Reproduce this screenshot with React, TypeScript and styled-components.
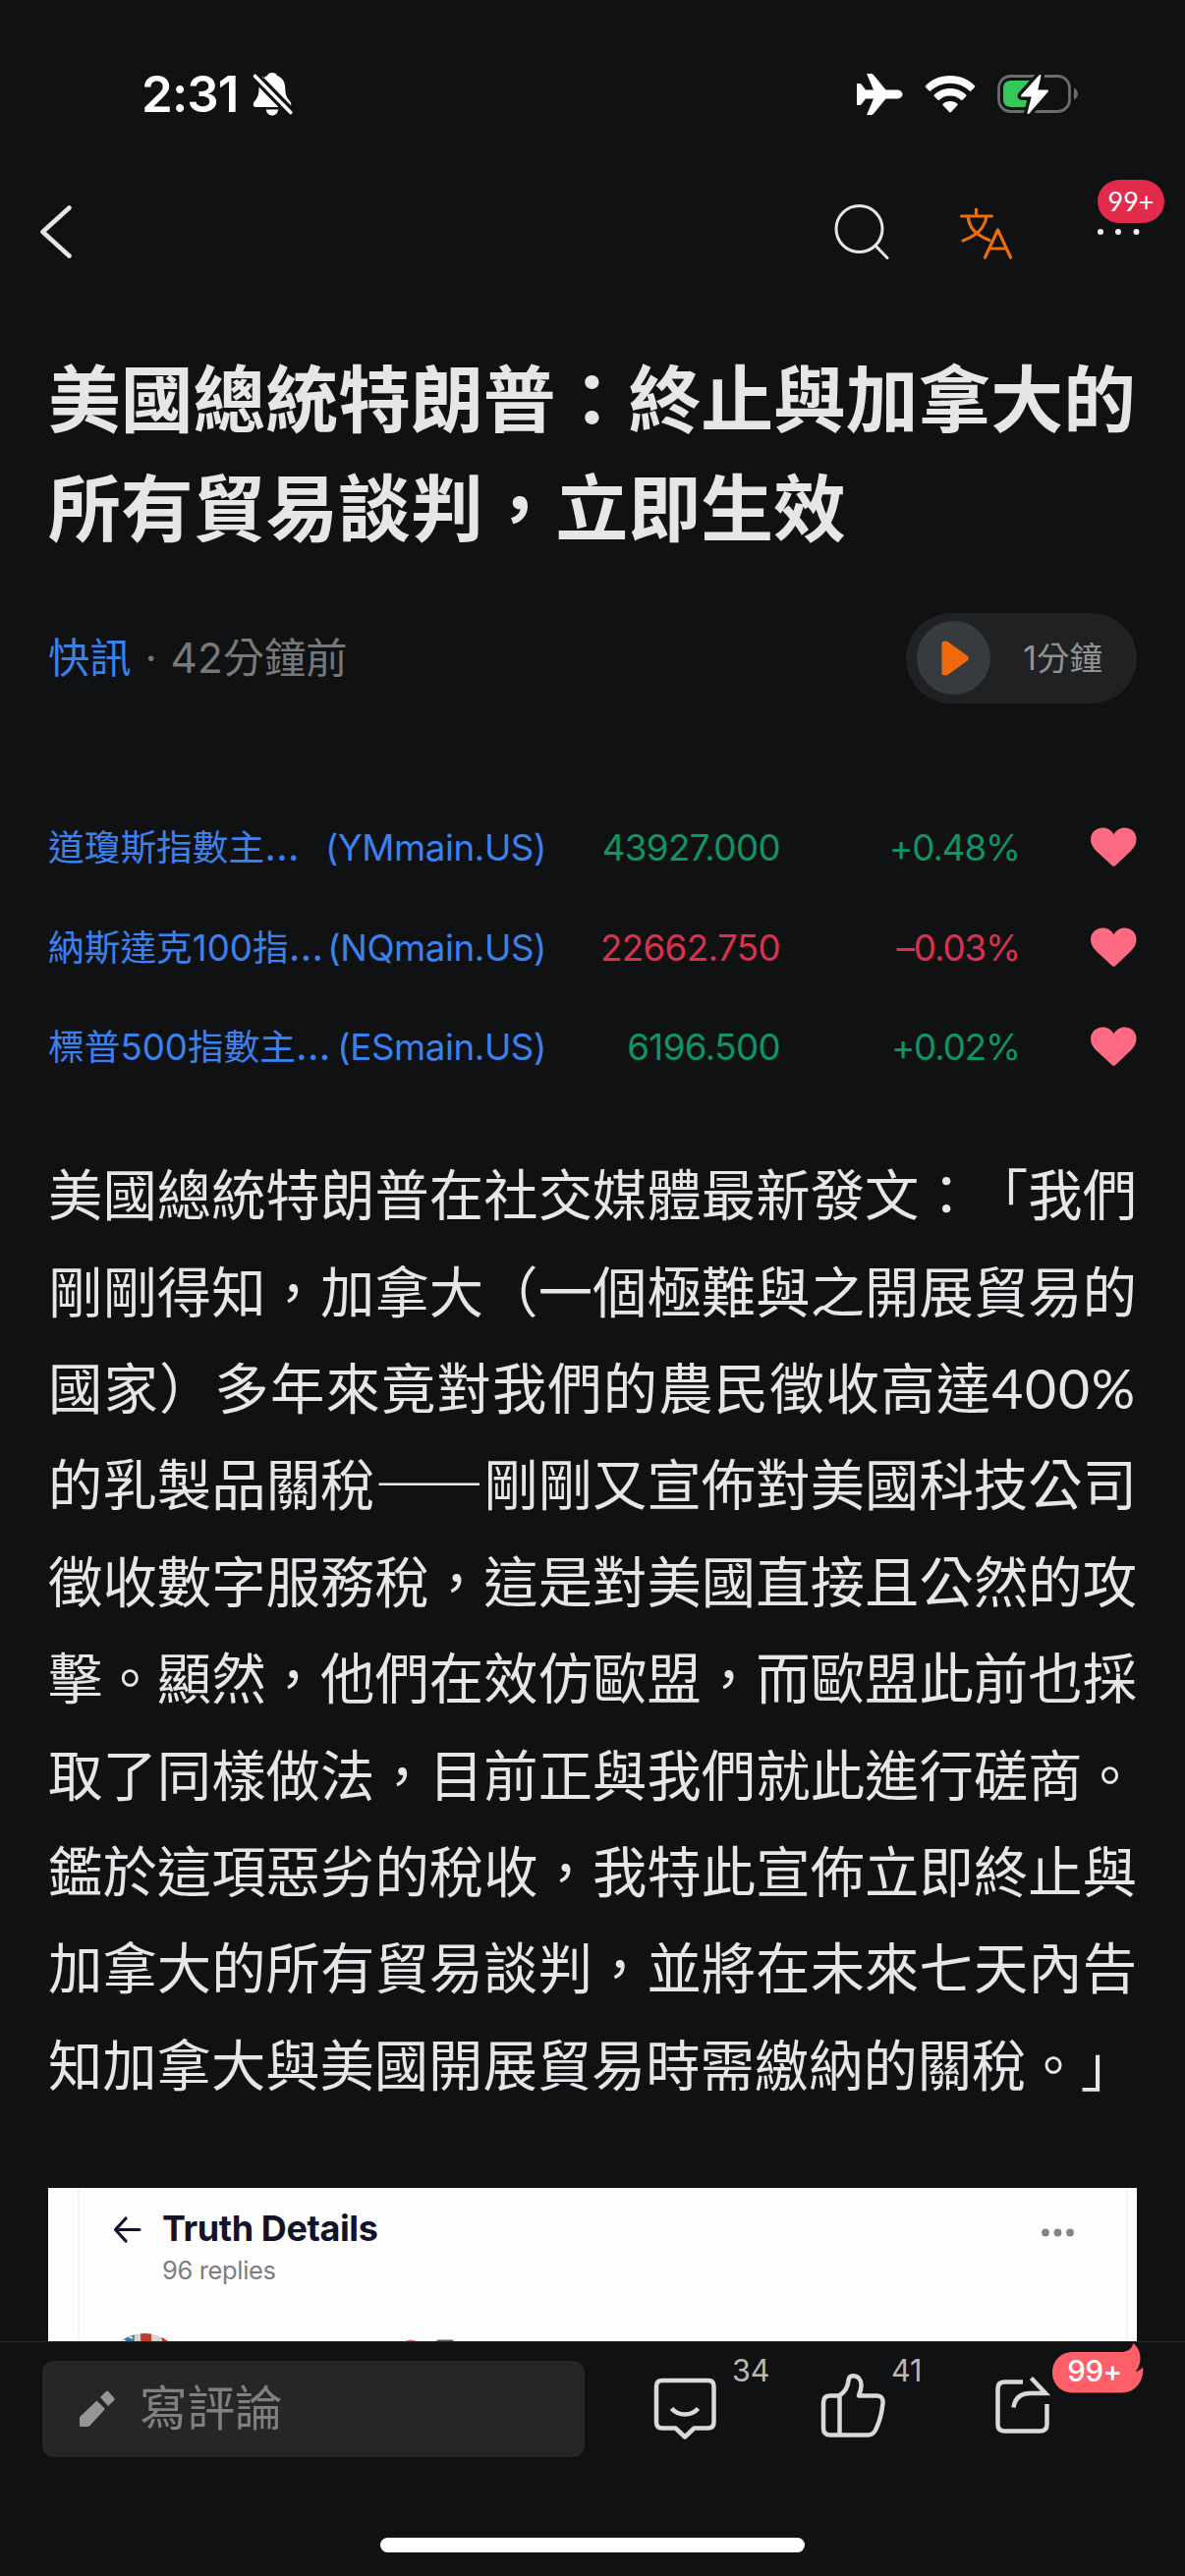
import React from 'react';
import styled, { createGlobalStyle } from 'styled-components';

const CJK = '"Noto Sans CJK TC", sans-serif';
const UI = `Inter, ${CJK}`;
const READ = `Lato, ${CJK}`;

const Global = createGlobalStyle`
  *, *::before, *::after { box-sizing: border-box; }
  html, body { margin: 0; background: #101113; }
  body { font-family: ${UI}; color: #e5e6e8; text-spacing-trim: space-all; }
  svg { display: block; flex: none; }
`;

const Screen = styled.div`
  width: 1206px;
  height: 2622px;
  display: flex;
  flex-direction: column;
  overflow: hidden;
  background: #101113;
`;

const StatusBar = styled.header`
  flex: none;
  height: 170px;
  padding: 66px 109px 0 144px;
  display: flex;
  justify-content: space-between;
  align-items: flex-start;
  color: #fff;
`;

const StatusGroup = styled.div<{ $gap: number }>`
  height: 60px;
  display: flex;
  align-items: center;
  gap: ${(p) => p.$gap}px;
`;

const Clock = styled.span`
  font-size: 51px;
  line-height: 60px;
  font-weight: 600;
  letter-spacing: -0.9px;
`;

const NavBar = styled.nav`
  flex: none;
  height: 132px;
  padding: 36px 43px 0 37px;
  display: flex;
  justify-content: space-between;
  align-items: flex-start;
`;

const NavActions = styled.div`
  display: grid;
  grid-template-columns: 130px 139px 48px;
`;

const IconButton = styled.button`
  position: relative;
  border: 0;
  padding: 0;
  background: none;
  color: inherit;
`;

const Badge = styled.span`
  position: absolute;
  left: 2px;
  top: -23px;
  width: 68px;
  height: 44px;
  border-radius: 22px;
  background: #e22b4b;
  color: #fff;
  font: 400 27px/44px ${READ};
  text-align: center;
`;

const Article = styled.main`
  flex: none;
  height: 2081px;
  padding: 50px 49px 0;
  display: flex;
  flex-direction: column;
  overflow: hidden;
`;

const Title = styled.h1`
  margin: 0;
  font-size: 73.8px;
  line-height: 111.3px;
  font-weight: 700;
`;

const Meta = styled.div`
  margin-top: 49px;
  height: 93px;
  display: flex;
  justify-content: space-between;
  align-items: center;
`;

const Byline = styled.div`
  display: flex;
  font-size: 42.3px;
  line-height: 60px;
  color: #77787a;
`;

const Tag = styled.span`
  color: #3b82e8;
`;

const Dot = styled.span`
  width: 40px;
  text-align: center;
`;

const Listen = styled.button`
  width: 235px;
  height: 92px;
  padding: 0 35px 0 11px;
  display: flex;
  justify-content: space-between;
  align-items: center;
  border: 0;
  border-radius: 46px;
  background: #1f2123;
  color: #919294;
  font: 400 33.5px/48px ${UI};
`;

const PlayDisc = styled.span`
  width: 75px;
  height: 75px;
  padding-left: 2px;
  border-radius: 50%;
  display: flex;
  align-items: center;
  justify-content: center;
  background: #373b40;
`;

const Quotes = styled.section`
  margin-top: 97px;
  display: grid;
  grid-auto-rows: 101.5px;
`;

const QuoteRow = styled.div`
  display: grid;
  grid-template-columns: 507px 238px 244px 1fr;
  align-items: center;
  font-size: 36.7px;
  line-height: 50px;
`;

const Instrument = styled.span`
  display: flex;
  justify-content: space-between;
  white-space: nowrap;
  color: #3b82f0;
`;

const Ellipsis = styled.span`
  font-size: 41px;
  line-height: 40px;
`;

const Code = styled.span`
  letter-spacing: -0.4px;
`;

const Figure = styled.span<{ $down?: boolean; $tight?: boolean }>`
  text-align: right;
  letter-spacing: ${(p) => (p.$tight ? -1.1 : -0.6)}px;
  color: ${(p) => (p.$down ? '#d9314f' : '#0f9565')};
`;

const Favorite = styled.span`
  display: flex;
  justify-content: flex-end;
`;

const Body = styled.p`
  margin: 50px 0 0;
  font-family: ${READ};
  font-size: 55.3px;
  line-height: 98.4px;
  text-align: justify;
`;

const Dash = styled.span`
  font-family: ${CJK};
  font-weight: 500;
  line-height: 60px;
`;

const Numeral = styled.span`
  letter-spacing: 1.8px;
`;

const Embed = styled.figure`
  flex: none;
  margin: 76px 0 0;
  height: 300px;
  padding: 0 9px 0 30px;
  background: #fefefe;
`;

const EmbedCard = styled.div`
  height: 100%;
  padding: 20px 51px 0 34px;
  border-left: 2px solid #f4f1f4;
  border-right: 2px solid #f4f3f5;
`;

const EmbedHead = styled.div`
  display: flex;
  align-items: flex-start;
`;

const EmbedTitles = styled.div`
  flex: 1;
  padding-left: 20px;
`;

const EmbedTitle = styled.div`
  font: 700 36px/42px Inter, sans-serif;
  letter-spacing: -0.4px;
  color: #14112a;
`;

const EmbedSub = styled.div`
  margin-top: 5px;
  font: 400 25.5px/34px Inter, sans-serif;
  letter-spacing: -0.35px;
  color: #7d7c83;
`;

const EmbedAuthor = styled.div`
  margin-top: 47px;
`;

const BottomBar = styled.footer`
  flex: none;
  height: 239px;
  padding: 19px 43px 0;
  border-top: 1px solid #27292b;
  background: #101113;
  display: flex;
  flex-direction: column;
  align-items: center;
`;

const BottomRow = styled.div`
  width: 100%;
  height: 98px;
  display: flex;
  align-items: flex-start;
`;

const CommentField = styled.div`
  flex: none;
  width: 552px;
  height: 98px;
  padding-left: 37px;
  display: flex;
  align-items: center;
  gap: 24px;
  border-radius: 12px;
  background: #262626;
  color: #808080;
  font-size: 48.5px;
  line-height: 60px;
`;

const Action = styled.button<{ $left: number; $width: number }>`
  position: relative;
  flex: none;
  margin: 8px 0 0 ${(p) => p.$left}px;
  width: ${(p) => p.$width}px;
  padding: 0;
  border: 0;
  background: none;
`;

const Count = styled.span<{ $gap: number }>`
  position: absolute;
  left: calc(100% + ${(p) => p.$gap}px);
  top: -18px;
  color: #bab8b5;
  font: 400 30.5px/40px ${UI};
`;

const HotBadge = styled.span`
  position: absolute;
  left: 59px;
  top: -26px;
  width: 94px;
  height: 52px;
`;

const HotText = styled.span`
  position: absolute;
  left: 14px;
  top: 8px;
  width: 58px;
  text-align: center;
  color: #fff;
  font: 500 29.5px/40px ${UI};
  letter-spacing: -0.5px;
`;

const HomeIndicator = styled.div`
  margin-top: 82px;
  width: 432px;
  height: 15px;
  border-radius: 8px;
  background: #fff;
`;

const BellOff = () => (
  <svg width="41" height="44" viewBox="0 0 41 44">
    <path fill="#fff" d="M9.8 7.2C11.5 4.9 13.400 3.500 15 3C15.800 1 17.500 0 20 0C22.500 0 24.300 1 25 3C30.500 5 33 9.500 33.200 15C33.400 22 34.500 25 37.500 28.200C38.600 29.400 39.200 30.500 39.200 31.500V33.500L9.800 3.500Z" />
    <path fill="#fff" d="M6.600 14.500L26.500 35H3.500C1.500 35 .8 33.800 .8 32.200C.8 30.600 1.500 29.600 2.600 28.400C5.500 25 6.500 22 6.600 14.500ZM13.800 37.500H26.200C25.800 41 23.500 43.500 20 43.500C16.500 43.500 14.200 41 13.800 37.500Z" />
    <path d="M2.600 3.500L38.800 40.500" stroke="#101113" strokeWidth="9" />
    <path d="M2.600 3.500L38.800 40.500" stroke="#fff" strokeWidth="3.600" strokeLinecap="round" />
  </svg>
);

const Airplane = () => (
  <svg width="47" height="42" viewBox="0 0 47 42">
    <path fill="#fff" d="M10 0H14.500Q16 0 17 1.300L29.500 16.500H40.500C44 16.500 46.500 18.500 46.500 21C46.500 23.500 44 25.500 40.500 25.500H29.500L17 40.700Q16 42 14.500 42H10L17 25.500H9L4.500 31.300Q4 32 3 32H0V10H3Q4 10 4.500 10.700L9 16.500H17Z" />
  </svg>
);

const Wifi = () => (
  <svg width="52" height="38" viewBox="0 0 52 38">
    <path fill="#fff" d="M26 0C36.500 0 45 4 51 10.200Q51.800 11 51 11.800L47.300 15.500Q46.600 16.200 45.700 15.500C40.500 10.600 33.700 7.700 26 7.700S11.500 10.600 6.300 15.500Q5.400 16.200 4.700 15.500L1 11.800Q.2 11 1 10.200C7 4 15.500 0 26 0Z" />
    <path fill="#fff" d="M26 13C32.500 13 38 15.500 42.200 19.500Q43 20.300 42.200 21L38.500 24.700Q37.800 25.300 37 24.700C34 22 30.500 20.500 26 20.500S18 22 15 24.700Q14.200 25.300 13.500 24.700L9.800 21Q9 20.300 9.800 19.500C14 15.500 19.500 13 26 13Z" />
    <path fill="#fff" d="M26 26C29 26 31.500 27 33.500 28.800Q34 29.400 33.500 30L26.700 37.200Q26 37.900 25.300 37.200L18.500 30Q18 29.400 18.500 28.800C20.500 27 23 26 26 26Z" />
  </svg>
);

const Battery = () => (
  <svg width="82" height="42" viewBox="0 0 82 42">
    <rect x="1.500" y="2.500" width="72" height="36" rx="12" fill="none" stroke="#6b6c6e" strokeWidth="2.800" />
    <path d="M78 14.500C80.500 15.500 82 18 82 20.500C82 23 80.500 25.500 78 26.500Z" fill="#6b6c6e" />
    <path d="M14 7H38V34H14Q6 34 6 26V15Q6 7 14 7Z" fill="#34c759" />
    <path d="M43.500 2L25 22.500H36L31.500 40L51 17.500H40Z" fill="#fff" stroke="#101113" strokeWidth="9" strokeLinejoin="round" />
    <path d="M43.500 2L25 22.500H36L31.500 40L51 17.500H40Z" fill="#fff" stroke="#fff" strokeWidth="2" strokeLinejoin="round" />
  </svg>
);

const Back = () => (
  <svg width="40" height="60" viewBox="0 0 40 60" fill="none" stroke="#e5e6e8" strokeWidth="4.600" strokeLinecap="round" strokeLinejoin="round">
    <path d="M33.500 5.500L6.500 30L33.500 54.500" />
  </svg>
);

const Search = () => (
  <svg width="60" height="60" viewBox="0 0 60 60" fill="none" stroke="#e5e6e8" strokeWidth="3" strokeLinecap="round">
    <circle cx="28.500" cy="27" r="23.500" />
    <path d="M45 44L57 56.500" />
  </svg>
);

const Translate = () => (
  <svg width="58" height="60" viewBox="0 0 58 60" fill="none" stroke="#ec6e0a" strokeWidth="3.200" strokeLinecap="round" strokeLinejoin="round">
    <path d="M17.500 7V13.500M2.500 14H33.500M9 14C10 22 14 29 19.500 32.500C23 35 27 37 31 38.500M28 14C27 22 22 29 16.500 32.500C12.500 35.500 8 37.500 4 39" />
    <path d="M26.500 56L39.500 28L52.500 56M31 47H48" />
  </svg>
);

const More = () => (
  <svg width="48" height="60" viewBox="0 0 48 60" fill="#f2f2f3">
    <circle cx="5" cy="30" r="3" /><circle cx="23" cy="30" r="3" /><circle cx="41.500" cy="30" r="3" />
  </svg>
);

const Play = () => (
  <svg width="28" height="36" viewBox="0 0 28 36">
    <path d="M2 0.800H6L26.500 15.500Q29 18 26.500 20.500L6 35.200H2Q.5 35.200 .5 33.500V2.500Q.5 .8 2 .8Z" fill="#ef6a0c" />
  </svg>
);

const Heart = () => (
  <svg width="47" height="44" viewBox="0 0 47 44">
    <path fill="#fd6a81" d="M23.500 7.500C26 2.500 30 0 34.500 0C41.500 0 46.500 5.500 46.500 13C46.500 18 44.500 22 41 26L25 43Q23.500 44.200 22 43L5.500 26C2 22 0 18 0 13C0 5.500 5.500 0 12.500 0C17 0 21 2.500 23.500 7.500Z" transform="translate(0 1.500) scale(1 .9)" />
  </svg>
);

const ArrowLeft = () => (
  <svg width="30" height="44" viewBox="0 0 30 44" fill="none" stroke="#14112a" strokeWidth="3.200" strokeLinecap="round" strokeLinejoin="round">
    <path d="M27 22.500H2.500M13 11L2.500 22.500L13 34" />
  </svg>
);

const EmbedMore = () => (
  <svg width="36" height="50" viewBox="0 0 36 50" fill="#85848b">
    <circle cx="5" cy="25.500" r="3.900" /><circle cx="17.500" cy="25.500" r="3.900" /><circle cx="30" cy="25.500" r="3.900" />
  </svg>
);

const AuthorPreview = () => (
  <svg width="360" height="80" viewBox="0 0 360 80">
    <clipPath id="avatar"><circle cx="32" cy="40" r="40" /></clipPath>
    <g clipPath="url(#avatar)">
      <rect x="-8" width="80" height="80" fill="#d9d3c9" />
      <path d="M-8 0H22L18 80H-8Z" fill="#3c7895" />
      <path d="M28 0H39L41 80H30ZM49 0H60L72 80H58Z" fill="#bd3c2c" />
      <path d="M16 3L20 5M8 7L13 8" stroke="#dfe7e7" strokeWidth="2" />
    </g>
    <circle cx="303" cy="18" r="11.500" fill="#dd6b7c" />
    <rect x="329" y="6.500" width="18" height="18" rx="2" fill="#5c5b66" />
  </svg>
);

const Pencil = () => (
  <svg width="38" height="38" viewBox="0 0 38 38" fill="#969696">
    <path d="M18.500 10.500L27 19L11.500 36Q10.500 37 9 37H2Q1 37 1 36V28.500Q1 27.300 1.800 26.400ZM22 7L27.500 1.500Q29 0 30.500 1.500L36 7.500Q37.500 9 36 10.500L30 16Z" />
  </svg>
);

const Comment = () => (
  <svg width="64" height="74" viewBox="0 0 64 74" fill="none" stroke="#d8d9da" strokeWidth="4.500" strokeLinejoin="round">
    <path d="M9 12H55.500Q61.500 12 61.500 18V54.500Q61.500 60.500 55.500 60.500H41.500L32 69.500L22.500 60.500H9Q3 60.500 3 54.500V18Q3 12 9 12Z" />
    <path d="M18.500 40.500C25.500 48.500 38.500 48.500 45.500 40.500" />
  </svg>
);

const ThumbUp = () => (
  <svg width="66" height="74" viewBox="0 0 66 74" fill="none" stroke="#d8d9da" strokeWidth="4.500" strokeLinejoin="round">
    <path d="M19 27.500C24.500 24 28 18.500 28.500 12Q29 7.200 33 7.200C38 7.200 41.300 11 41.500 16.500C41.600 20 40.500 24 39 27.500H57Q64 27.500 63.500 35Q62 50 56.500 61.500Q54 67.500 48 67.500H10Q3 67.500 3 60.500V34.500Q3 27.500 10 27.500ZM19.500 27.500V67.500" />
  </svg>
);

const Share = () => (
  <svg width="60" height="74" viewBox="0 0 60 74" fill="none" stroke="#d8d9da" strokeWidth="4.500">
    <path d="M29 13.500H10.500Q3.500 13.500 3.500 20.500V56.500Q3.500 63.500 10.500 63.500H46.500Q53.500 63.500 53.500 56.500V36" strokeLinejoin="round" />
    <path d="M37.500 9.500L52 25H37Q21.500 25 19.500 39.500" />
  </svg>
);

const Flame = () => (
  <svg width="94" height="52" viewBox="0 0 94 52">
    <path fill="#ff5f68" d="M21 9H69C76 9 81 6.500 82.300 0C87 4 89.500 9 89.500 15.500C89.500 21 87.500 25 84.500 29.500Q89.500 28 92.300 24.300C93 39 85 50.500 70 50.500H21C8.500 50.500 0 41.500 0 30C0 18 8.500 9 21 9Z" />
  </svg>
);

const quotes = [
  { name: '道瓊斯指數主', code: '(YMmain.US)', price: '43927.000', change: '+0.48%' },
  { name: '納斯達克100指', code: '(NQmain.US)', price: '22662.750', change: '–0.03%', down: true },
  { name: '標普500指數主', code: '(ESmain.US)', price: '6196.500', change: '+0.02%' },
];

export default function App() {
  return (
    <Screen lang="zh-Hant">
      <Global />
      <StatusBar>
        <StatusGroup $gap={15}>
          <Clock>2:31</Clock>
          <BellOff />
        </StatusGroup>
        <StatusGroup $gap={22}>
          <Airplane />
          <Wifi />
          <Battery />
        </StatusGroup>
      </StatusBar>
      <NavBar>
        <IconButton aria-label="返回"><Back /></IconButton>
        <NavActions>
          <IconButton aria-label="搜尋"><Search /></IconButton>
          <IconButton aria-label="翻譯"><Translate /></IconButton>
          <IconButton aria-label="更多">
            <More />
            <Badge>99+</Badge>
          </IconButton>
        </NavActions>
      </NavBar>
      <Article>
        <Title>美國總統特朗普：終止與加拿大的所有貿易談判，立即生效</Title>
        <Meta>
          <Byline>
            <Tag>快訊</Tag>
            <Dot>·</Dot>
            <span>42分鐘前</span>
          </Byline>
          <Listen>
            <PlayDisc><Play /></PlayDisc>
            1分鐘
          </Listen>
        </Meta>
        <Quotes>
          {quotes.map((q) => (
            <QuoteRow key={q.code}>
              <Instrument>
                <span>{q.name}<Ellipsis>…</Ellipsis></span>
                <Code>{q.code}</Code>
              </Instrument>
              <Figure $down={q.down}>{q.price}</Figure>
              <Figure $down={q.down} $tight>{q.change}</Figure>
              <Favorite><Heart /></Favorite>
            </QuoteRow>
          ))}
        </Quotes>
        <Body>
          美國總統特朗普在社交媒體最新發文：「我們剛剛得知，加拿大（一個極難與之開展貿易的國家）多年來竟對我們的農民徵收高達<Numeral>400%</Numeral>的乳製品關稅<Dash>——</Dash>剛剛又宣佈對美國科技公司徵收數字服務稅，這是對美國直接且公然的攻擊。顯然，他們在效仿歐盟，而歐盟此前也採取了同樣做法，目前正與我們就此進行磋商。鑑於這項惡劣的稅收，我特此宣佈立即終止與加拿大的所有貿易談判，並將在未來七天內告知加拿大與美國開展貿易時需繳納的關稅。」
        </Body>
        <Embed>
          <EmbedCard>
            <EmbedHead>
              <ArrowLeft />
              <EmbedTitles>
                <EmbedTitle>Truth Details</EmbedTitle>
                <EmbedSub>96 replies</EmbedSub>
              </EmbedTitles>
              <EmbedMore />
            </EmbedHead>
            <EmbedAuthor><AuthorPreview /></EmbedAuthor>
          </EmbedCard>
        </Embed>
      </Article>
      <BottomBar>
        <BottomRow>
          <CommentField>
            <Pencil />
            寫評論
          </CommentField>
          <Action $left={70} $width={64} aria-label="評論">
            <Comment />
            <Count $gap={16}>34</Count>
          </Action>
          <Action $left={106} $width={66} aria-label="讚好">
            <ThumbUp />
            <Count $gap={6}>41</Count>
          </Action>
          <Action $left={111} $width={60} aria-label="分享">
            <Share />
            <HotBadge>
              <Flame />
              <HotText>99+</HotText>
            </HotBadge>
          </Action>
        </BottomRow>
        <HomeIndicator />
      </BottomBar>
    </Screen>
  );
}
